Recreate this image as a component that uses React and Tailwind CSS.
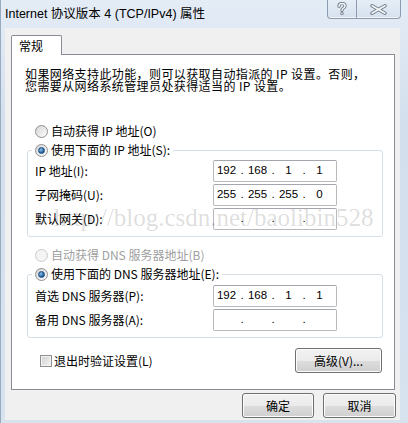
import React from "react";

const cjk = "font-['Noto_Sans_CJK_SC',sans-serif]";

function Radio({ checked, disabled }) {
  return (
    <span
      className={`w-[13px] h-[13px] rounded-full border flex items-center justify-center shrink-0 ${
        disabled
          ? "border-[#c9cbcd] bg-[#f4f4f4]"
          : "border-[#8e8f8f] bg-gradient-to-br from-[#d6d6d6] to-[#fdfdfd]"
      }`}
    >
      {checked && (
        <span className="w-[7px] h-[7px] rounded-full bg-[radial-gradient(circle_at_35%_35%,#8fc1ec,#1f5a96_70%)] border border-[#1b4f82]" />
      )}
    </span>
  );
}

function IpField({ value }) {
  const parts = value || ["", "", "", ""];
  return (
    <div className="w-[124px] h-[22px] border border-[#b6babf] border-t-[#a3a7ad] rounded-[2px] bg-white flex items-center font-['Liberation_Sans',sans-serif] text-[11.5px] text-black">
      {parts.map((p, i) => (
        <React.Fragment key={i}>
          <span className="w-[25px] text-center">{p}</span>
          {i < 3 && <span className="w-[6px] text-center">.</span>}
        </React.Fragment>
      ))}
    </div>
  );
}

function Row({ label, value }) {
  return (
    <div className="h-[22px] flex items-center pl-[7px]">
      <span className="w-[178px]">{label}</span>
      <IpField value={value} />
    </div>
  );
}

function Button({ children, className }) {
  return (
    <div
      className={`h-[25px] rounded-[3px] border border-[#707070] bg-[linear-gradient(#f2f2f2_0%,#ebebeb_50%,#dddddd_51%,#cfcfcf_100%)] shadow-[inset_0_0_0_1px_#fcfcfc] flex items-center justify-center text-[12px] ${className}`}
    >
      {children}
    </div>
  );
}

function Legend({ children, checked }) {
  return (
    <legend className="ml-[4px] px-[3px] h-[16px] flex items-center gap-[3px]">
      <Radio checked={checked} />
      <span>{children}</span>
    </legend>
  );
}

export default function App() {
  return (
    <div className={`w-[408px] h-[423px] bg-[linear-gradient(#e4ecf6,#d3dfed_30%,#d8e3f0)] border-l border-[#9aabbf] flex flex-col overflow-hidden ${cjk} text-black`}>
      {/* title bar */}
      <div className="h-[28px] flex items-start shrink-0">
        <span className="pl-[4px] pt-[4px] text-[12.5px] leading-[20px] font-['Liberation_Sans','Noto_Sans_CJK_SC',sans-serif]">
          Internet 协议版本 4 (TCP/IPv4) 属性
        </span>
        <div className="ml-auto mr-[7px] h-[19px] flex border border-t-0 border-[#8d9cb0] rounded-b-[4px] bg-[linear-gradient(#e6edf6,#d6e1ee)] shadow-[inset_0_-1px_0_#f2f6fb]">
          <div className="w-[29px] flex items-center justify-center border-r border-[#8d9cb0]">
            <svg width="10" height="14" viewBox="0 0 10 14">
              <g fill="none" strokeLinecap="round">
                <path d="M2 4.2 Q2 1.5 5 1.5 Q8 1.5 8 4 Q8 5.6 5.8 6.6 Q5 7 5 8.6" stroke="#6f7b89" strokeWidth="3.2" />
                <path d="M2 4.2 Q2 1.5 5 1.5 Q8 1.5 8 4 Q8 5.6 5.8 6.6 Q5 7 5 8.6" stroke="#f7f9fb" strokeWidth="1.4" />
              </g>
              <circle cx="5" cy="11.6" r="1.7" fill="#6f7b89" />
              <circle cx="5" cy="11.6" r="0.8" fill="#f7f9fb" />
            </svg>
          </div>
          <div className="w-[43px] flex items-center justify-center">
            <svg width="19" height="11" viewBox="0 0 19 11">
              <g strokeLinecap="round">
                <path d="M3 1.8 L16 9.2 M16 1.8 L3 9.2" stroke="#6f7b89" strokeWidth="3.4" />
                <path d="M3 1.8 L16 9.2 M16 1.8 L3 9.2" stroke="#f7f9fb" strokeWidth="1.6" />
              </g>
            </svg>
          </div>
        </div>
      </div>

      {/* client area */}
      <div className="ml-[4px] mr-[8px] h-[392px] bg-[#f0f0f0] flex flex-col">
        <div className="ml-[6px] mt-[7px] w-[51px] h-[20px] -mb-px bg-white border border-b-0 border-[#898c95] rounded-t-[2px] relative z-10 pl-[7px] pt-[1px] text-[12px] leading-[18px]">
          常规
        </div>
        <div className="ml-[6px] w-[384px] h-[336px] bg-white border border-[#898c95] flex flex-col relative text-[12px]">
          <p className="mt-[13px] ml-[13px] leading-[12px] tracking-[0.4px]">
            如果网络支持此功能，则可以获取自动指派的 IP 设置。否则，
            <br />
            您需要从网络系统管理员处获得适当的 IP 设置。
          </p>

          <div className="mt-[31px] ml-[23px] h-[16px] flex items-center gap-[3px]">
            <Radio />
            <span>自动获得 IP 地址(O)</span>
          </div>

          <fieldset className="mt-[3px] ml-[15px] w-[356px] border border-[#d5dfe5] rounded-[3px] pt-[2px] pb-[6px] flex flex-col gap-[2px]">
            <Legend checked>使用下面的 IP 地址(S):</Legend>
            <Row label="IP 地址(I):" value={["192", "168", "1", "1"]} />
            <Row label="子网掩码(U):" value={["255", "255", "255", "0"]} />
            <Row label="默认网关(D):" />
          </fieldset>

          <div className="mt-[10px] ml-[23px] h-[16px] flex items-center gap-[3px] text-[#a0a0a0]">
            <Radio disabled />
            <span>自动获得 DNS 服务器地址(B)</span>
          </div>

          <fieldset className="mt-[3px] ml-[15px] w-[356px] border border-[#d5dfe5] rounded-[3px] pt-[3px] pb-[6px] flex flex-col gap-[2px]">
            <Legend checked>使用下面的 DNS 服务器地址(E):</Legend>
            <Row label="首选 DNS 服务器(P):" value={["192", "168", "1", "1"]} />
            <Row label="备用 DNS 服务器(A):" />
          </fieldset>

          <div className="mt-[10px] h-[25px] flex items-center">
            <div className="ml-[28px] flex items-center gap-[2px]">
              <span className="w-[12px] h-[12px] border border-[#8e8f8f] bg-[linear-gradient(135deg,#cfcfcf,#f4f4f4)] shadow-[inset_0_0_0_1px_#f4f4f4]" />
              <span>退出时验证设置(L)</span>
            </div>
            <Button className="ml-auto mr-[12px] w-[87px]">高级(V)...</Button>
          </div>

          <span className="absolute left-[42px] top-[150px] text-[25px] leading-none font-['Liberation_Serif',serif] text-black/15 whitespace-nowrap pointer-events-none">
            http://blog.csdn.net/baolibin528
          </span>
        </div>

        <div className="mt-[3px] mr-[4px] flex justify-end gap-[9px]">
          <Button className="w-[72px]">确定</Button>
          <Button className="w-[73px]">取消</Button>
        </div>
      </div>
    </div>
  );
}
